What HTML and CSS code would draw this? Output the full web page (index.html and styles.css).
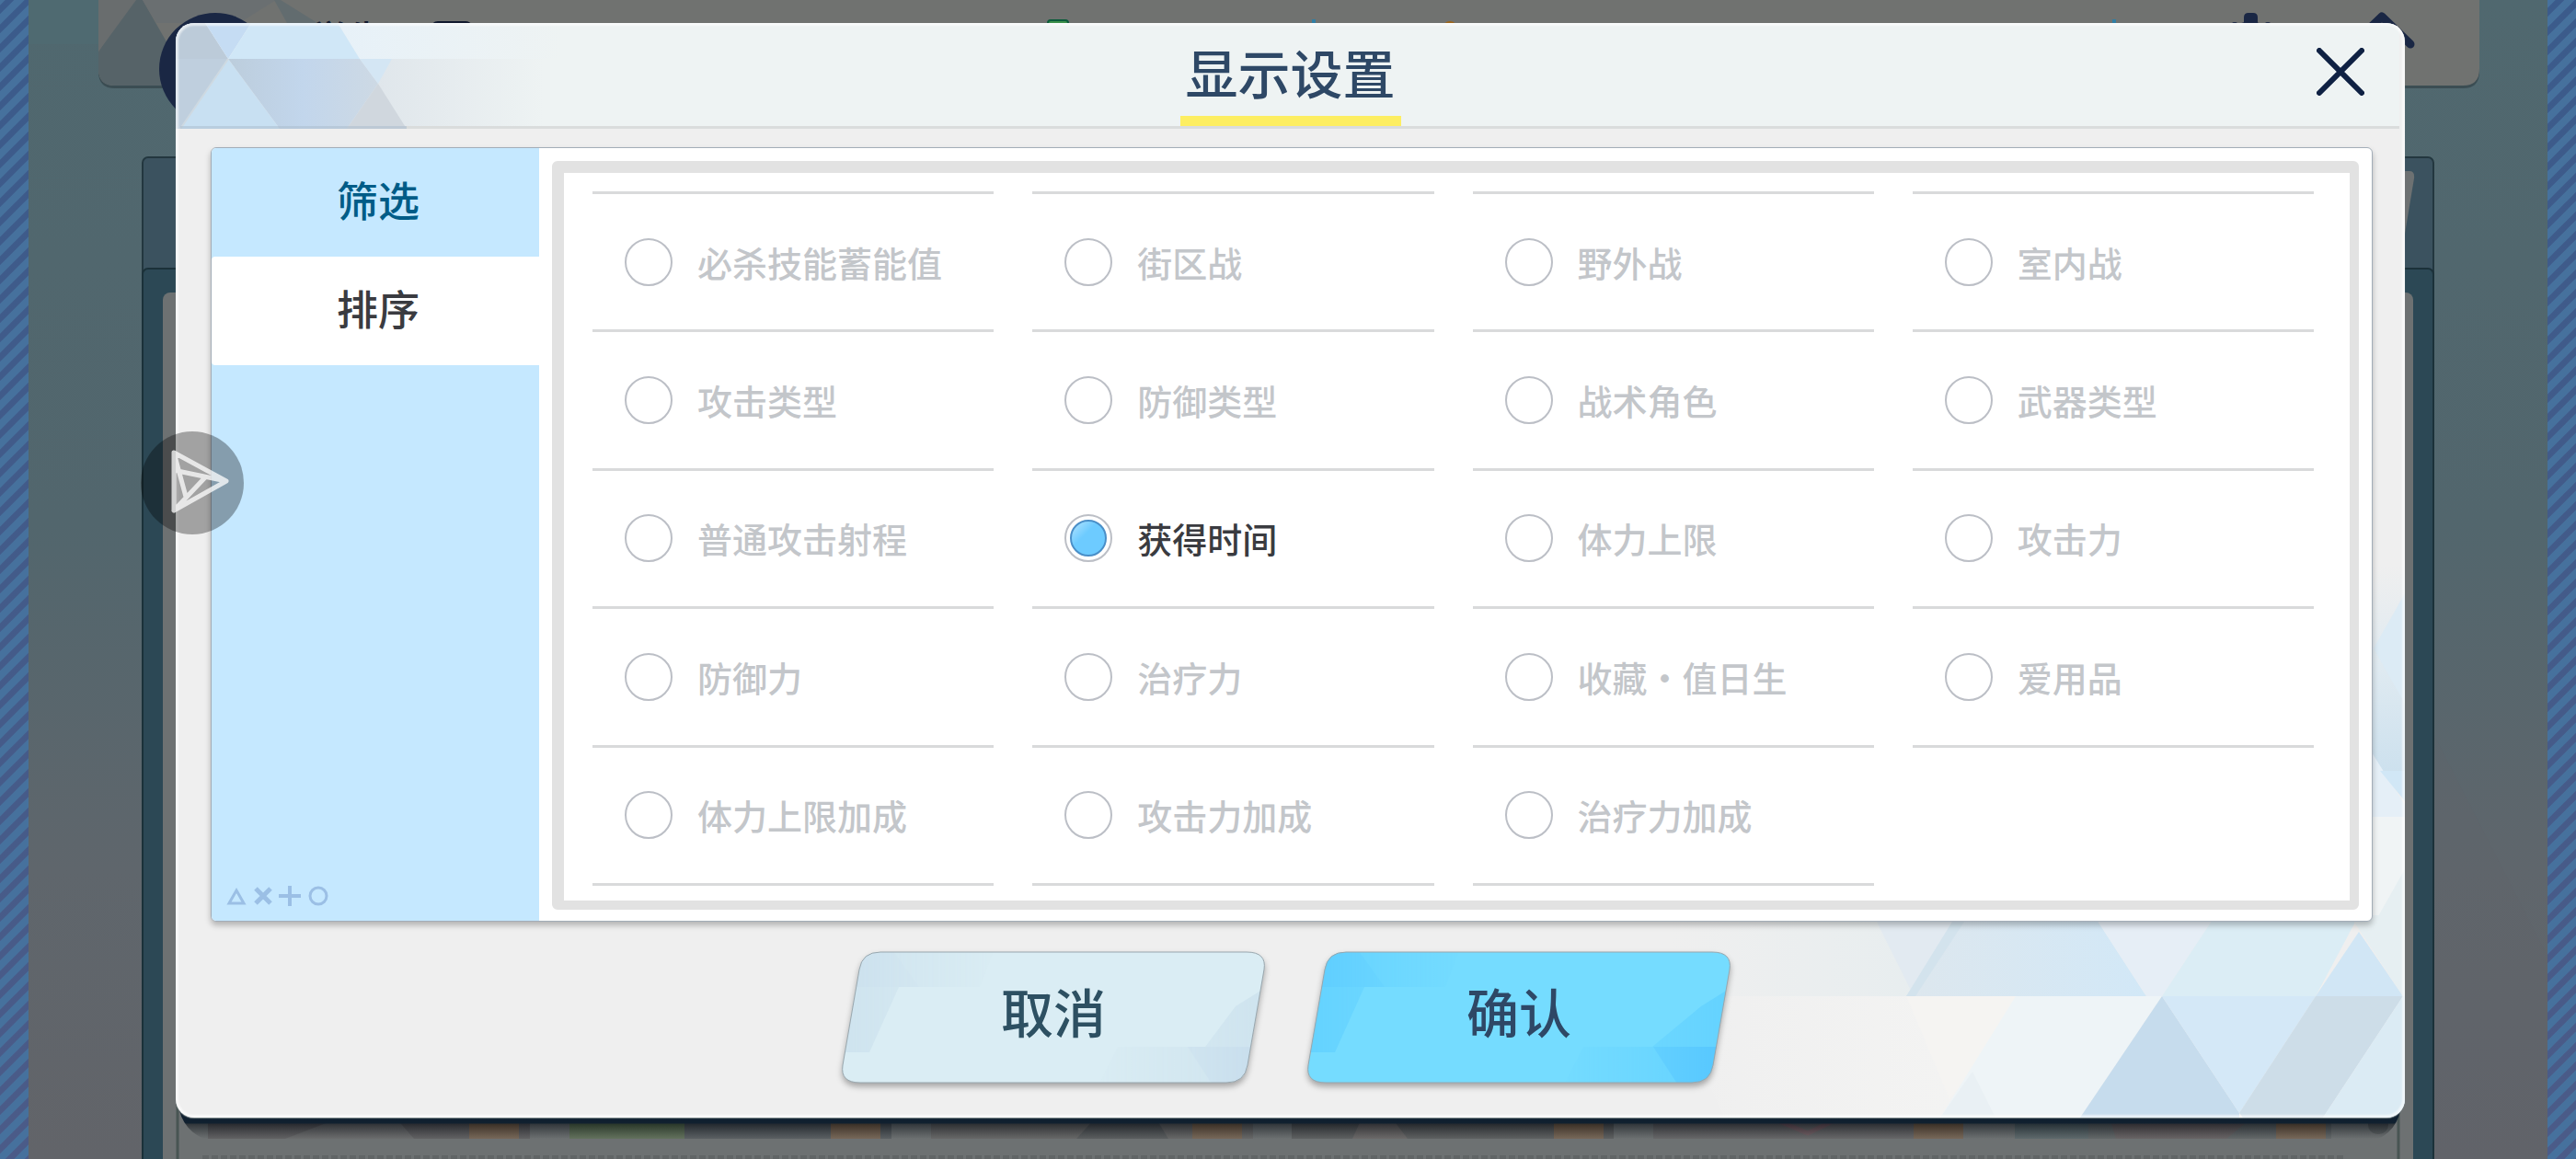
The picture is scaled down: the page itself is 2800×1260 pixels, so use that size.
FILE: index.html
```html
<!DOCTYPE html>
<html lang="zh-CN">
<head>
    <meta charset="UTF-8">
    <meta name="viewport" content="width=device-width, initial-scale=1.0">
    <title>显示设置</title>
    <link rel="stylesheet" href="styles.css">
</head>
<body>
    <!-- Dimmed student list behind the dialog -->
    <svg class="scene" viewBox="0 0 2800 1260" preserveAspectRatio="none" aria-hidden="true">
        <defs>
            <linearGradient id="sky" x1="0" y1="0" x2="0" y2="1">
                <stop offset="0" stop-color="#50686f" />
                <stop offset="0.45" stop-color="#52666d" />
                <stop offset="0.75" stop-color="#5f666c" />
                <stop offset="1" stop-color="#626469" />
            </linearGradient>
            <linearGradient id="stripe-fill" gradientUnits="userSpaceOnUse" x1="0" y1="0" x2="0" y2="1260">
                <stop offset="0" stop-color="#3b5b8b" />
                <stop offset="1" stop-color="#4b5b88" />
            </linearGradient>
            <linearGradient id="card-fade" x1="0" y1="0" x2="0" y2="1">
                <stop offset="0" stop-color="#0d1f33" />
                <stop offset="0.64" stop-color="#10202f" />
                <stop offset="0.68" stop-color="#22272c" stop-opacity="0.75" />
                <stop offset="1" stop-color="#6c7071" stop-opacity="0.7" />
            </linearGradient>
            <pattern id="stripes" width="21" height="21" patternUnits="userSpaceOnUse">
                <path d="M-5 5L5 -5M-2 23L23 -2M16 26L26 16" stroke="#46719d" stroke-width="8" />
            </pattern>
            <pattern id="dots" width="10" height="4" patternUnits="userSpaceOnUse">
                <rect width="7" height="4" fill="#616566" />
            </pattern>
        </defs>
        <rect width="2800" height="1260" fill="url(#sky)" />
        <path d="M31 0H107V48H31Z" fill="#4f6a71" />
        <path d="M2400 320L2800 1100V1260H2480Z" fill="#61656a" opacity="0.3" />

        <rect width="31" height="1260" fill="url(#stripe-fill)" />
        <rect width="31" height="1260" fill="url(#stripes)" />
        <rect x="2769" width="31" height="1260" fill="url(#stripe-fill)" />
        <rect x="2769" width="31" height="1260" fill="url(#stripes)" />

        <path d="M107 -20H2695V78Q2695 96 2677 96H125Q107 96 107 78Z" fill="#3b4d53" />
        <path d="M107 -20H2695V75Q2695 93 2677 93H125Q107 93 107 75Z" fill="#707270" />
        <path d="M107 56L145 0H155L195 70V93H125Q107 93 107 75Z" fill="#566368" />
        <path d="M107 56L148 0L107 0Z" fill="#696d6e" />
        <path d="M155 0H300L260 25H170Z" fill="#6a6f71" />
        <path d="M298 0L312 25H345L305 0Z" fill="#626c6f" />
        <circle cx="234" cy="75" r="61" fill="#1a2744" />
        <rect x="468" y="23" width="46" height="30" rx="8" fill="#10192e" />
        <rect x="1139" y="22" width="22" height="20" rx="3" fill="#3b8f4a" stroke="#0b5b3b" stroke-width="2" />
        <path d="M1428 21V40M2298 21V40" stroke="#2f7ea3" stroke-width="4" />
        <circle cx="1576" cy="31" r="8" fill="#9b651b" />
        <path d="M2439 40V19Q2439 14 2444 14H2449Q2454 14 2454 19V40Z" fill="#1a2744" />
        <circle cx="2446" cy="48" r="25" fill="#1a2744" />
        <circle cx="2429" cy="29" r="5" fill="#1a2744" />
        <circle cx="2465" cy="29" r="5" fill="#1a2744" />
        <path d="M2564 42L2589 18L2620 48" fill="none" stroke="#1a2744" stroke-width="9" stroke-linecap="round" stroke-linejoin="round" />

        <rect x="155" y="171" width="2490" height="1200" rx="6" fill="#3b525f" stroke="#23373f" stroke-width="2" />
        <path d="M2600 186H2619Q2625 186 2624 194L2613 260H2600Z" fill="#6d7172" />
        <rect x="155" y="292" width="2490" height="1100" rx="6" fill="#2c4855" stroke="#1b3139" stroke-width="2" />
        <rect x="177" y="318" width="2446" height="1100" rx="8" fill="#6d7172" />
        <path d="M193 1200V1260M2607 1200V1260" stroke="#485553" stroke-width="3" />

        <g>
            <rect x="226" y="1205" width="350" height="33" fill="#4a4144" />
            <path d="M310 1238L370 1215H430L450 1238Z" fill="#696464" />
            <rect x="510" y="1205" width="54" height="33" fill="#905520" />
            <rect x="619" y="1205" width="125" height="33" fill="#4e762f" />
            <rect x="744" y="1205" width="225" height="33" fill="#333a42" />
            <rect x="903" y="1205" width="54" height="33" fill="#905520" />
            <rect x="1012" y="1205" width="350" height="33" fill="#5c5552" />
            <path d="M1170 1238L1200 1205H1250L1270 1238Z" fill="#333436" />
            <rect x="1296" y="1205" width="54" height="33" fill="#905520" />
            <rect x="1404" y="1205" width="350" height="33" fill="#3f3d3d" />
            <path d="M1470 1238L1485 1205H1505L1530 1238Z" fill="#6a5b57" />
            <rect x="1689" y="1205" width="54" height="33" fill="#905520" />
            <rect x="1797" y="1205" width="334" height="33" fill="#5b5355" />
            <path d="M1925 1215L1965 1232L2000 1215" fill="none" stroke="#824450" stroke-width="5" />
            <rect x="2080" y="1205" width="54" height="33" fill="#905520" />
            <rect x="2190" y="1205" width="344" height="33" fill="#4f5556" />
            <path d="M2190 1205H2270V1238H2190Z" fill="#3f5a60" />
            <path d="M2290 1205H2460L2420 1238H2300Z" fill="#60494a" />
            <rect x="2474" y="1205" width="54" height="33" fill="#905520" />
            <rect x="2574" y="1205" width="22" height="28" rx="10" fill="#3d4143" />
            <path d="M193 1190H2611Q2611 1226 2585 1238H222Q193 1226 193 1190Z" fill="url(#card-fade)" />
        </g>
        <rect x="218" y="1256" width="2330" height="4" fill="url(#dots)" />
        <text class="scene-title" x="338" y="57">学生</text>
    </svg>

    <main class="dialog" role="dialog" aria-labelledby="dialog-title">
        <svg class="dialog-art" viewBox="0 0 900 600" aria-hidden="true">
            <defs>
                <linearGradient id="band" x1="0" y1="0" x2="1" y2="0">
                    <stop offset="0" stop-color="#dde7ee" />
                    <stop offset="1" stop-color="#d2e8f7" />
                </linearGradient>
                <linearGradient id="haze" x1="0" y1="0" x2="1" y2="0">
                    <stop offset="0" stop-color="#efefef" />
                    <stop offset="1" stop-color="#e6edef" />
                </linearGradient>
                <linearGradient id="haze-low" x1="0" y1="0" x2="1" y2="0">
                    <stop offset="0" stop-color="#efefef" />
                    <stop offset="1" stop-color="#f4f4f3" />
                </linearGradient>
                <linearGradient id="edge" x1="0" y1="0" x2="0" y2="1">
                    <stop offset="0" stop-color="#efefef" />
                    <stop offset="0.5" stop-color="#dfeaf1" />
                    <stop offset="1" stop-color="#cde1ee" />
                </linearGradient>
            </defs>
            <!-- right edge beside the list -->
            <path d="M860 0H900V223H860Z" fill="url(#edge)" />
            <path d="M900 30V150L866 90Z" fill="#dcebf5" />
            <path d="M862 200L900 260V275H862Z" fill="#e5eff7" />
            <path d="M873 223H900V256Z" fill="#d1e7f6" />
            <path d="M862 273H900V390H862Z" fill="#f0f4f5" />
            <path d="M900 330V390H866Z" fill="#e6eff2" />
            <!-- upper band -->
            <path d="M100 380H421L358 468H100Z" fill="url(#haze)" />
            <path d="M326 387H421L366 468Z" fill="#e2eaf1" />
            <path d="M421 380H562L619 468H358Z" fill="url(#band)" />
            <path d="M408 387H421L368 468H358Z" fill="#d3e3ed" />
            <path d="M562 380H694L636 468H619Z" fill="#e6eef6" />
            <path d="M694 380H850L803 468H636Z" fill="#dbedf5" />
            <path d="M850 398L898 468H803Z" fill="#d1e6f5" />
            <path d="M840 380H900V468H898Z" fill="#e6eff2" />
            <!-- lower band -->
            <path d="M100 468H477L428 600H160Z" fill="url(#haze-low)" />
            <path d="M358 468H477L430 550L405 580Z" fill="#f5f4f2" />
            <path d="M477 468H636L547 600H395Z" fill="#eef4f7" />
            <path d="M430 550L455 600H395Z" fill="#e9f0f4" />
            <path d="M636 468L720 595V600H547Z" fill="#c6dced" />
            <path d="M636 468H803L720 595Z" fill="#d4e8f7" />
            <path d="M803 468H898L811 600H724L720 595Z" fill="#cddde8" />
            <path d="M898 468H900V600H811Z" fill="#dbebf4" />
        </svg>

        <header class="dialog-header">
            <svg class="header-art" viewBox="0 0 420 115" aria-hidden="true">
                <defs>
                    <linearGradient id="fade-top" x1="0" y1="0" x2="1" y2="0">
                        <stop offset="0" stop-color="#e7f1f8" />
                        <stop offset="1" stop-color="#eef3f3" />
                    </linearGradient>
                    <linearGradient id="fade-low" x1="0" y1="0" x2="1" y2="0">
                        <stop offset="0" stop-color="#dde4ea" />
                        <stop offset="1" stop-color="#eef3f3" />
                    </linearGradient>
                    <linearGradient id="mid" x1="0" y1="0" x2="1" y2="0">
                        <stop offset="0" stop-color="#bccddc" />
                        <stop offset="0.5" stop-color="#c2d6ec" />
                        <stop offset="1" stop-color="#cdd9e4" />
                    </linearGradient>
                </defs>
                <path d="M176 0H420V39H200Z" fill="url(#fade-top)" />
                <path d="M200 39H400V112H186Z" fill="url(#fade-low)" />
                <path d="M0 0H32L57 39H0Z" fill="#bccbd9" />
                <path d="M32 0H82L57 39Z" fill="#c5dcf3" />
                <path d="M82 0H176L200 39H57Z" fill="#d0e7f7" />
                <path d="M0 39H57L5 115H0Z" fill="#bfcfde" />
                <path d="M57 39L113 115H5Z" fill="#c8e0f2" />
                <path d="M57 39H200L220 66L186 115H113Z" fill="url(#mid)" />
                <path d="M200 39H235L220 66Z" fill="#d4e6f4" />
                <path d="M220 66L251 115H186Z" fill="#d0d7de" />
                <path d="M57 39L5 115" stroke="#ced9e1" stroke-width="2" />
                <path d="M5 112H251V115H5Z" fill="#a9bccb" opacity="0.5" />
            </svg>
            <h1 class="dialog-title" id="dialog-title">显示设置</h1>
            <button class="close-btn" type="button" aria-label="关闭">
                <svg viewBox="0 0 52 52"><path d="M3 3L49 49M49 3L3 49" /></svg>
            </button>
        </header>

        <div class="panel">
            <nav class="tabs">
                <button class="tab" type="button">筛选</button>
                <button class="tab active" type="button">排序</button>
                <svg class="tabs-mark" viewBox="0 0 112 24" aria-hidden="true">
                    <path d="M12 6L20 20H4Z" />
                    <path d="M33 4L49 20M49 4L33 20" stroke-width="5" />
                    <path d="M70 1V23M58 12H82" stroke-width="4" />
                    <circle cx="101" cy="12" r="9" />
                </svg>
            </nav>

            <form class="options-frame">
                <div class="options">
                    <label class="option"><input type="radio" name="sort"><span>必杀技能蓄能值</span></label>
                    <label class="option"><input type="radio" name="sort"><span>街区战</span></label>
                    <label class="option"><input type="radio" name="sort"><span>野外战</span></label>
                    <label class="option"><input type="radio" name="sort"><span>室内战</span></label>
                    <label class="option"><input type="radio" name="sort"><span>攻击类型</span></label>
                    <label class="option"><input type="radio" name="sort"><span>防御类型</span></label>
                    <label class="option"><input type="radio" name="sort"><span>战术角色</span></label>
                    <label class="option"><input type="radio" name="sort"><span>武器类型</span></label>
                    <label class="option"><input type="radio" name="sort"><span>普通攻击射程</span></label>
                    <label class="option"><input type="radio" name="sort" checked><span>获得时间</span></label>
                    <label class="option"><input type="radio" name="sort"><span>体力上限</span></label>
                    <label class="option"><input type="radio" name="sort"><span>攻击力</span></label>
                    <label class="option"><input type="radio" name="sort"><span>防御力</span></label>
                    <label class="option"><input type="radio" name="sort"><span>治疗力</span></label>
                    <label class="option"><input type="radio" name="sort"><span>收藏・值日生</span></label>
                    <label class="option"><input type="radio" name="sort"><span>爱用品</span></label>
                    <label class="option"><input type="radio" name="sort"><span>体力上限加成</span></label>
                    <label class="option"><input type="radio" name="sort"><span>攻击力加成</span></label>
                    <label class="option"><input type="radio" name="sort"><span>治疗力加成</span></label>
                </div>
            </form>
        </div>

        <footer class="dialog-actions">
            <button class="action cancel" type="button">
                <svg class="action-art" viewBox="0 0 460 144" aria-hidden="true">
                    <defs>
                        <clipPath id="slant">
                            <path d="M42 1H440Q462 1 459 20L441 124Q438 143 418 143H20Q-2 143 1 124L19 20Q22 1 42 1Z" />
                        </clipPath>
                        <linearGradient id="fade-in" x1="0" y1="0" x2="1" y2="0">
                            <stop offset="0" stop-color="#fff" stop-opacity="0" />
                            <stop offset="1" stop-color="#fff" />
                        </linearGradient>
                        <linearGradient id="fade-out" x1="0" y1="0" x2="1" y2="0">
                            <stop offset="0" stop-color="#fff" />
                            <stop offset="1" stop-color="#fff" stop-opacity="0" />
                        </linearGradient>
                        <mask id="mask-left">
                            <rect width="170" height="144" fill="url(#fade-out)" />
                        </mask>
                        <mask id="mask-right">
                            <rect x="270" width="190" height="144" fill="url(#fade-in)" />
                        </mask>
                    </defs>
                    <g clip-path="url(#slant)">
                        <rect class="base" width="460" height="144" />
                        <g mask="url(#mask-left)">
                            <path class="tint" d="M0 0H165L150 39H62L30 110H0Z" />
                            <path class="deep faint" d="M0 0H56L84 39H0Z" />
                        </g>
                        <g mask="url(#mask-right)">
                            <path class="tint" d="M460 40L428 60L395 104H460Z" />
                            <path class="tint" d="M280 144L300 104H460V144Z" />
                            <path class="deep" d="M376 104H460V144H402Z" />
                        </g>
                    </g>
                    <path class="outline" d="M42 1H440Q462 1 459 20L441 124Q438 143 418 143H20Q-2 143 1 124L19 20Q22 1 42 1Z" />
                </svg>
                <span>取消</span>
            </button>
            <button class="action confirm" type="button">
                <svg class="action-art" viewBox="0 0 460 144" aria-hidden="true">
                    <g clip-path="url(#slant)">
                        <rect class="base" width="460" height="144" />
                        <g mask="url(#mask-left)">
                            <path class="tint" d="M0 0H165L150 39H62L30 110H0Z" />
                            <path class="deep faint" d="M0 0H56L84 39H0Z" />
                        </g>
                        <g mask="url(#mask-right)">
                            <path class="tint" d="M460 40L428 60L375 104H460Z" />
                            <path class="tint" d="M280 144L300 104H460V144Z" />
                            <path class="deep" d="M376 104H460V144H402Z" />
                        </g>
                    </g>
                    <path class="outline" d="M42 1H440Q462 1 459 20L441 124Q438 143 418 143H20Q-2 143 1 124L19 20Q22 1 42 1Z" />
                </svg>
                <span>确认</span>
            </button>
        </footer>
    </main>

    <button class="float-btn" type="button" aria-label="悬浮球">
        <svg viewBox="0 0 112 112">
            <path d="M36 23L93 54L36 86ZM36 23L49 71M40 43L93 54M36 86L70 50" />
        </svg>
    </button>
</body>
</html>
```

FILE: styles.css
```css
* {
    box-sizing: border-box;
}

body {
    margin: 0;
    min-height: 100vh;
    display: flex;
    position: relative;
    overflow: hidden;
    background-color: #52666d;
    font-family: "Noto Sans CJK SC", "Noto Sans", sans-serif;
    font-weight: 500;
}

button {
    margin: 0;
    padding: 0;
    border: none;
    background: none;
    font-family: inherit;
    font-weight: inherit;
    cursor: pointer;
}

.scene {
    position: absolute;
    top: 0;
    left: 0;
    width: 100%;
    height: 100%;
}

.scene-title {
    font-size: 40px;
    fill: #10192e;
}

/* Dialog */
.dialog {
    flex: 1;
    position: relative;
    display: flex;
    flex-direction: column;
    margin: 25px 186px 45px 191px;
    border-radius: 20px;
    background-color: #efefef;
    box-shadow: 0 1px 1px #7f8a8c;
    overflow: hidden;
}

.dialog::after {
    content: "";
    position: absolute;
    inset: 0;
    border-radius: 20px;
    box-shadow: inset 0 0 2px 3px rgba(255, 255, 255, 0.6);
    pointer-events: none;
}

.dialog-art {
    position: absolute;
    right: 0;
    bottom: 0;
    width: 900px;
    height: 600px;
}

.dialog-header {
    position: relative;
    display: flex;
    justify-content: center;
    height: 115px;
    margin-right: 6px;
    padding-left: 6px;
    border-bottom: 3px solid #dadcdc;
    background-color: #eef3f3;
}

.header-art {
    position: absolute;
    left: 0;
    top: 0;
    width: 420px;
    height: 115px;
}

.dialog-title {
    margin: 0;
    padding: 0 6px;
    height: 112px;
    border-bottom: 11px solid #fdee61;
    color: #2e4866;
    font-size: 57px;
    font-weight: 500;
    line-height: 104px;
}

.close-btn {
    position: absolute;
    right: 38px;
    top: 27px;
    width: 52px;
    height: 52px;
}

.close-btn svg {
    display: block;
    fill: none;
    stroke: #0f2143;
    stroke-width: 6;
    stroke-linecap: round;
}

/* Tabs and sort options */
.panel {
    flex: 1;
    position: relative;
    display: flex;
    margin: 20px 35px 0 38px;
    border: 1px solid #a3adb8;
    border-radius: 6px;
    background-color: #fff;
    box-shadow: 0 4px 6px rgba(0, 0, 0, 0.25);
}

.tabs {
    display: flex;
    flex-direction: column;
    width: 356px;
    border-radius: 5px 0 0 5px;
    background-color: #c5e8ff;
}

.tab {
    height: 118px;
    padding: 0 0 8px 6px;
    color: #005c87;
    font-size: 45px;
}

.tab.active {
    border-radius: 4px 0 0 4px;
    background-color: #fff;
    color: #3a3b40;
}

.tabs-mark {
    width: 112px;
    height: 24px;
    margin: auto 0 15px 15px;
    fill: none;
    stroke: #9bbfe5;
    stroke-width: 3;
}

.options-frame {
    flex: 1;
    display: flex;
    margin: 14px 14px 12px 14px;
    border: 13px solid #e2e2e2;
    border-width: 13px 10px 10px 13px;
    border-radius: 6px;
    background-color: #fff;
}

.options {
    flex: 1;
    display: grid;
    grid-template-columns: repeat(4, 1fr);
    grid-auto-rows: 1fr;
    column-gap: 42px;
    padding: 23px 39px 16px 31px;
}

.option {
    position: relative;
    display: flex;
    align-items: center;
    gap: 27px;
    padding-left: 35px;
    border-bottom: 3px solid #d9dadb;
    color: #c3c6ca;
    font-size: 38px;
    line-height: 56px;
    white-space: nowrap;
    cursor: pointer;
}

/* top rule of the first row */
.option:nth-child(-n+4)::before {
    content: "";
    position: absolute;
    top: -3px;
    left: 0;
    right: 0;
    height: 3px;
    background-color: #d9dadb;
}

.option input {
    appearance: none;
    width: 52px;
    height: 52px;
    margin: 0;
    border: 2px solid #bcbfc6;
    border-radius: 50%;
    background-color: #fff;
    cursor: pointer;
}

.option input:checked {
    display: grid;
    place-items: center;
}

.option input:checked::before {
    content: "";
    width: 36px;
    height: 36px;
    border: 2px solid #4a8fc8;
    border-radius: 50%;
    background: linear-gradient(135deg, #b5e4ff 0%, #6dcbff 40%, #6dcbff 100%);
}

.option input:checked + span {
    color: #3a3b40;
}

/* Buttons */
.dialog-actions {
    position: relative;
    display: flex;
    justify-content: center;
    gap: 46px;
    padding: 32px 9px 37px 0;
}

.action {
    position: relative;
    width: 460px;
    height: 144px;
    padding-bottom: 17px;
    font-size: 57px;
}

.action span {
    position: relative;
}

.action-art {
    position: absolute;
    left: 0;
    top: 0;
    width: 460px;
    height: 144px;
    overflow: visible;
    filter: drop-shadow(0 4px 3px rgba(0, 0, 0, 0.3));
}

.action .outline {
    fill: none;
    stroke: #98a6ad;
    stroke-width: 1;
}

.cancel {
    color: #2d5062;
}

.cancel .base {
    fill: #daedf4;
}

.cancel .tint {
    fill: #cee3ee;
}

.cancel .deep {
    fill: #c7ddec;
}

.confirm {
    color: #2e4866;
}

.confirm .base {
    fill: #75dcff;
}

.confirm .tint {
    fill: #64d2ff;
}

.confirm .deep {
    fill: #55c6ff;
}

.action .faint {
    opacity: 0.4;
}

/* Floating shortcut over the dialog edge */
.float-btn {
    position: absolute;
    left: 153px;
    top: 469px;
    width: 112px;
    height: 112px;
    border-radius: 50%;
    background-color: rgba(0, 0, 0, 0.32);
}

.float-btn svg {
    display: block;
    fill: none;
    stroke: #fff;
    stroke-width: 5;
    stroke-linejoin: round;
    stroke-linecap: round;
    opacity: 0.75;
}
```
